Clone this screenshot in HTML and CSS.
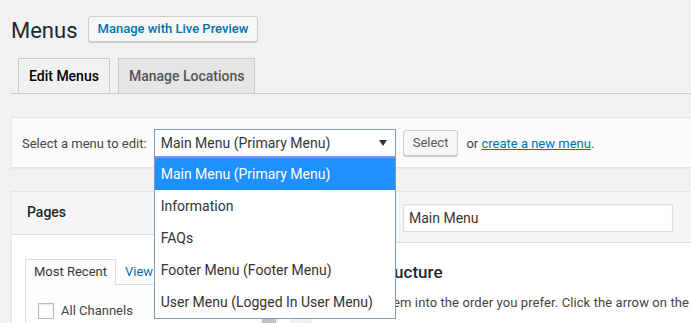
FILE: index.html
```html
<!DOCTYPE html>
<html lang="en">
<head>
    <meta charset="UTF-8">
    <meta name="viewport" content="width=device-width, initial-scale=1.0">
    <title>Menus</title>
    <link rel="stylesheet" href="styles.css">
</head>
<body>
    <div class="wrap">
        <div class="page-head">
            <h1 class="page-title">Menus</h1>
            <a class="btn btn-head" href="#">Manage with Live Preview</a>
        </div>

        <nav class="nav-tabs">
            <a class="nav-tab active" href="#">Edit Menus</a>
            <a class="nav-tab" href="#">Manage Locations</a>
        </nav>

        <div class="manage-menus">
            <label class="manage-label">Select a menu to edit:</label>
            <div class="menu-select">
                <div class="select-box">
                    Main Menu (Primary Menu)
                    <svg class="select-arrow" width="8" height="6" viewBox="0 0 8 6"><path d="M0 0h8L4 6z" fill="#333"/></svg>
                </div>
                <ul class="select-list">
                    <li class="selected">Main Menu (Primary Menu)</li>
                    <li>Information</li>
                    <li>FAQs</li>
                    <li>Footer Menu (Footer Menu)</li>
                    <li>User Menu (Logged In User Menu)</li>
                </ul>
            </div>
            <button class="btn">Select</button>
            <span class="or-create">or <a href="#">create a new menu</a>.</span>
        </div>

        <div class="menus-frame">
            <div class="settings-col">
                <div class="panel">
                    <h3 class="panel-title">Pages</h3>
                    <div class="panel-body">
                        <ul class="panel-tabs">
                            <li class="active">Most Recent</li>
                            <li><a href="#">View All</a></li>
                            <li><a href="#">Search</a></li>
                        </ul>
                        <div class="tabs-panel">
                            <ul class="check-list">
                                <li><span class="checkbox"></span>All Channels</li>
                            </ul>
                            <div class="scrollbar"><div class="thumb"></div></div>
                        </div>
                    </div>
                </div>
            </div>

            <div class="menu-edit">
                <div class="menu-header">
                    <label class="menu-name-label">Menu Name</label>
                    <input class="menu-name" type="text" value="Main Menu">
                </div>
                <div class="menu-body">
                    <h3>Menu Structure</h3>
                    <p>Drag each item into the order you prefer. Click the arrow on the right of the item to reveal additional configuration options.</p>
                </div>
            </div>
        </div>
    </div>
</body>
</html>
```
FILE: styles.css
```css
body {
    margin: 0;
    overflow: hidden;
    background: #f1f1f1;
    font-family: Roboto, "Liberation Sans", sans-serif;
    font-size: 13px;
    color: #444;
}

a {
    color: #0073aa;
}

.wrap {
    width: 760px;
    padding-left: 11px;
}

/* header */
.page-head {
    display: flex;
    align-items: flex-start;
    padding-top: 16px;
}

.page-title {
    margin: 2px 0 0;
    font-size: 22px;
    font-weight: 400;
    line-height: 26px;
    color: #23282d;
}

.btn {
    display: inline-block;
    height: 26px;
    padding: 0 9px;
    border: 1px solid #ccc;
    border-radius: 3px;
    background: #f7f7f7;
    box-shadow: 0 1px 0 #ccc;
    font-family: inherit;
    font-size: 13px;
    line-height: 24px;
    color: #555;
    text-decoration: none;
    box-sizing: border-box;
}

.btn-head {
    margin-left: 10px;
    font-weight: 500;
    color: #0073aa;
}

/* tabs */
.nav-tabs {
    display: flex;
    gap: 8px;
    margin-top: 14px;
    padding-left: 7px;
    border-bottom: 1px solid #ccc;
}

.nav-tab {
    padding: 5px 10px;
    border: 1px solid #ccc;
    border-bottom: none;
    background: #e5e5e5;
    font-size: 14px;
    font-weight: 500;
    line-height: 24px;
    color: #555;
    text-decoration: none;
}

.nav-tab.active {
    background: #f1f1f1;
    color: #000;
}

/* select a menu */
.manage-menus {
    display: flex;
    align-items: center;
    margin-top: 23px;
    padding: 11px 10px 10px;
    border: 1px solid #e5e5e5;
    background: #fbfbfb;
    box-shadow: 0 1px 1px rgba(0, 0, 0, 0.04);
}

.manage-label {
    margin-right: 7px;
}

.menu-select {
    position: relative;
    width: 242px;
    margin-right: 7px;
}

.select-box {
    display: flex;
    align-items: center;
    justify-content: space-between;
    height: 28px;
    padding: 0 8px 0 6px;
    border: 1px solid #7a9cd3;
    background: #fff;
    font-size: 14px;
    color: #32373c;
    box-sizing: border-box;
}

.select-list {
    position: absolute;
    top: 28px;
    left: 0;
    right: 0;
    z-index: 10;
    margin: 0;
    padding: 0;
    list-style: none;
    border: 1px solid #7f9db9;
    background: #fff;
}

.select-list li {
    height: 32px;
    padding-left: 6px;
    font-size: 14px;
    line-height: 32px;
    color: #333;
}

.select-list li.selected {
    background: #1e90ff;
    color: #fff;
}

.btn + .or-create {
    margin-left: 8px;
}

/* columns */
.menus-frame {
    display: flex;
    align-items: flex-start;
    margin-top: 23px;
}

.settings-col {
    width: 281px;
    margin-right: 19px;
    flex-shrink: 0;
}

.panel {
    border: 1px solid #e5e5e5;
    background: #fff;
    box-shadow: 0 1px 1px rgba(0, 0, 0, 0.04);
}

.panel-title {
    margin: 0;
    padding: 10px 10px 11px 15px;
    border-bottom: 1px solid #dfdfdf;
    background: #f5f5f5;
    font-size: 14px;
    font-weight: 500;
    line-height: 21px;
    color: #23282d;
}

.panel-body {
    padding: 24px 13px 0;
    height: 200px;
}

.panel-tabs {
    display: flex;
    margin: 0;
    padding: 0;
    list-style: none;
}

.panel-tabs li {
    padding: 3px 8px;
    border: 1px solid transparent;
    border-bottom: none;
    line-height: 18px;
}

.panel-tabs li a {
    text-decoration: none;
}

.panel-tabs li.active {
    position: relative;
    margin-bottom: -1px;
    padding-bottom: 4px;
    border-color: #ddd;
    background: #fdfdfd;
    color: #32373c;
}

.tabs-panel {
    display: flex;
    height: 200px;
    border: 1px solid #ddd;
    background: #fdfdfd;
}

.check-list {
    flex: 1;
    margin: 0;
    padding: 18px 0 0 12px;
    list-style: none;
}

.check-list li {
    display: flex;
    align-items: center;
    line-height: 16px;
    color: #444;
}

.checkbox {
    width: 16px;
    height: 16px;
    margin-right: 7px;
    border: 1px solid #b4b9be;
    background: #fff;
    box-shadow: inset 0 1px 2px rgba(0, 0, 0, 0.1);
    box-sizing: border-box;
}

.scrollbar {
    width: 14px;
    margin-right: 1px;
    padding-top: 17px;
}

.scrollbar .thumb {
    height: 150px;
    background: #c1c1c1;
}

/* menu edit */
.menu-edit {
    flex: 1;
    border: 1px solid #e5e5e5;
    background: #fff;
    box-shadow: 0 1px 1px rgba(0, 0, 0, 0.04);
}

.menu-header {
    display: flex;
    align-items: center;
    padding: 12px 10px 10px;
    border-bottom: 1px solid #dfdfdf;
    background: #f5f5f5;
}

.menu-name-label {
    width: 81px;
}

.menu-name {
    width: 270px;
    height: 28px;
    margin: 0;
    padding: 0 5px;
    border: 1px solid #ddd;
    background: #fff;
    box-shadow: inset 0 1px 2px rgba(0, 0, 0, 0.07);
    font-family: inherit;
    font-size: 14px;
    color: #32373c;
    box-sizing: border-box;
}

.menu-body {
    padding: 0 11px;
    height: 200px;
}

.menu-body h3 {
    margin: 17px 0 0 2px;
    font-size: 17px;
    font-weight: 500;
    line-height: 25px;
    color: #23282d;
}

.menu-body p {
    margin: 8px 0 0;
    line-height: 19.5px;
    letter-spacing: 0.1px;
    white-space: nowrap;
}
```
